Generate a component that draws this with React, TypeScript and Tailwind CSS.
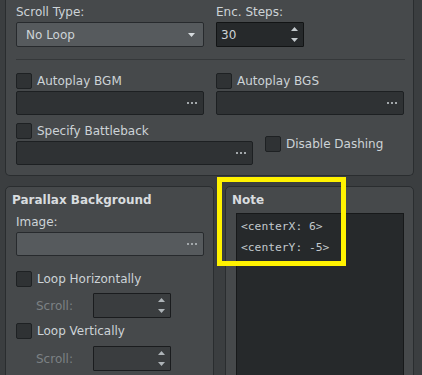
import React from "react";

const Dots = () => (
  <div className="flex gap-[2px]">
    <span className="w-[2px] h-[2px] bg-[#a3a8ab]" />
    <span className="w-[2px] h-[2px] bg-[#a3a8ab]" />
    <span className="w-[2px] h-[2px] bg-[#a3a8ab]" />
  </div>
);

const Arrows = ({ color = "#c3c9cd" }: { color?: string }) => (
  <div className="flex flex-col gap-[7px]">
    <svg width="7" height="4" viewBox="0 0 7 4">
      <polygon points="3.5,0 7,4 0,4" fill={color} />
    </svg>
    <svg width="7" height="4" viewBox="0 0 7 4">
      <polygon points="0,0 7,0 3.5,4" fill={color} />
    </svg>
  </div>
);

const Check = ({ label }: { label: string }) => (
  <div className="flex items-center gap-[5px] h-4">
    <div className="w-4 h-4 rounded-[2px] bg-[#2f3234] border border-[#1e2123]" />
    <span className="text-[12px] leading-[14px] text-[#cdd3d7]">{label}</span>
  </div>
);

const PathField = ({ w, light }: { w: string; light?: boolean }) => (
  <div
    className={`${w} h-[24px] rounded-[2px] border flex items-center justify-end pr-[6px] ${
      light ? "bg-[#565a5d] border-[#272a2d]" : "bg-[#2f3234] border-[#1d2022]"
    }`}
  >
    <Dots />
  </div>
);

const ScrollRow = () => (
  <div className="flex items-center h-[25px]">
    <span className="w-[57px] ml-[20px] text-[12px] text-[#7c8184]">Scroll:</span>
    <div className="w-[78px] h-[25px] bg-[#3a3d3f] border border-[#1a1c1e] rounded-[1px] flex items-center justify-end pr-[5px]">
      <Arrows color="#aeb4b8" />
    </div>
  </div>
);

export default function App() {
  return (
    <div
      className="relative w-[422px] h-[375px] overflow-hidden bg-[#3b3e40] text-[#cdd3d7]"
      style={{ fontFamily: '"DejaVu Sans", sans-serif' }}
    >
      {/* map settings panel */}
      <div className="ml-[5px] w-[409px] h-[176px] bg-[#46494b] border border-t-0 border-[#2a2d2f] rounded-b-[5px] pl-[10px] pt-[5px]">
        <div className="flex gap-[12px]">
          <div className="w-[188px]">
            <div className="h-[14px] text-[12px] leading-[14px]">Scroll Type:</div>
            <div className="mt-[3px] h-[25px] bg-[#565a5d] border border-[#272a2d] rounded-[2px] flex items-center justify-between pl-[9px] pr-[8px]">
              <span className="text-[12px] leading-[14px]">No Loop</span>
              <svg width="7" height="4" viewBox="0 0 7 4">
                <polygon points="0,0 7,0 3.5,4" fill="#d6dbde" />
              </svg>
            </div>
          </div>
          <div className="w-[188px]">
            <div className="h-[14px] text-[12px] leading-[14px]">Enc. Steps:</div>
            <div className="mt-[3px] w-[88px] h-[25px] bg-[#26292b] border border-[#121415] rounded-[1px] flex items-center justify-between pl-[4px] pr-[5px]">
              <span className="text-[12px] leading-[14px]">30</span>
              <Arrows />
            </div>
          </div>
        </div>

        <div className="mt-[12px] h-px w-[389px] bg-[#35383a]" />

        <div className="mt-[13px] flex gap-[12px]">
          <div className="w-[188px]">
            <Check label="Autoplay BGM" />
            <div className="mt-[2px]">
              <PathField w="w-[188px]" />
            </div>
          </div>
          <div className="w-[188px]">
            <Check label="Autoplay BGS" />
            <div className="mt-[2px]">
              <PathField w="w-[188px]" />
            </div>
          </div>
        </div>

        <div className="mt-[8px] flex items-center gap-[12px]">
          <div className="w-[237px]">
            <Check label="Specify Battleback" />
            <div className="mt-[2px]">
              <PathField w="w-[237px]" />
            </div>
          </div>
          <Check label="Disable Dashing" />
        </div>
      </div>

      <div className="mt-[10px] ml-[5px] flex gap-[11px]">
        {/* parallax */}
        <div className="w-[209px] h-[200px] bg-[#46494b] border border-[#2a2d2f] rounded-t-[5px] pl-[6px] pt-[6px]">
          <div className="h-[14px] text-[12px] leading-[14px] font-bold text-[#d8dcdf]">Parallax Background</div>
          <div className="ml-[4px]">
            <div className="mt-[8px] h-[14px] text-[12px] leading-[14px]">Image:</div>
            <div className="mt-[3px]">
              <PathField w="w-[188px]" light />
            </div>
            <div className="mt-[15px]">
              <Check label="Loop Horizontally" />
            </div>
            <div className="mt-[6px]">
              <ScrollRow />
            </div>
            <div className="mt-[5px]">
              <Check label="Loop Vertically" />
            </div>
            <div className="mt-[7px]">
              <ScrollRow />
            </div>
          </div>
        </div>

        {/* note */}
        <div className="w-[189px] h-[200px] bg-[#46494b] border border-[#2a2d2f] rounded-t-[5px] pl-[6px] pt-[6px]">
          <div className="h-[14px] text-[12px] leading-[14px] font-bold text-[#d8dcdf]">Note</div>
          <div
            className="mt-[6px] ml-[4px] w-[168px] h-[180px] bg-[#26292b] border border-[#17191a] pl-[4px] pt-[3px] text-[11.3px] leading-[20.5px] text-[#c3c9cd]"
            style={{ fontFamily: '"DejaVu Sans Mono", monospace' }}
          >
            <div>&lt;centerX: 6&gt;</div>
            <div>&lt;centerY: -5&gt;</div>
          </div>
        </div>
      </div>

      {/* highlight annotation */}
      <div className="absolute left-[217px] top-[177px] w-[129px] h-[89px] border-[5px] border-[#fff200]" />
    </div>
  );
}
